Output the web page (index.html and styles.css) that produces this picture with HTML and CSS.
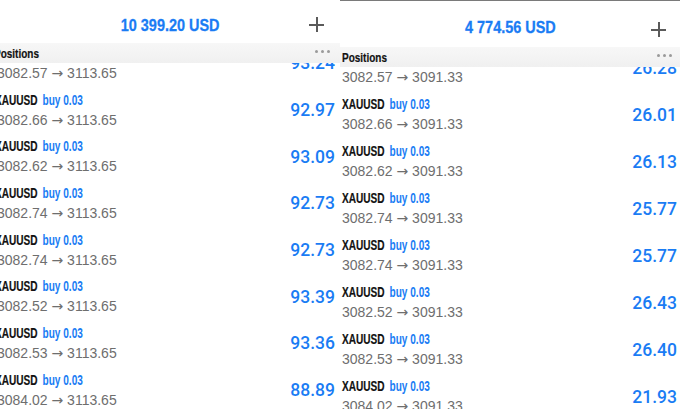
FILE: index.html
```html
<!DOCTYPE html>
<html lang="en">
<head>
    <meta charset="UTF-8">
    <meta name="viewport" content="width=device-width, initial-scale=1.0">
    <title>Positions</title>
    <link rel="stylesheet" href="styles.css">
</head>
<body>
    <div class="screens">
        <div class="screen screen-left">
            <div class="top">
                <span class="balance">10 399.20 USD</span>
                <span class="plus"></span>
            </div>
            <div class="section">
                <span class="section-title">Positions</span>
                <span class="dots"><i></i><i></i><i></i></span>
            </div>
            <div class="list">
                <div class="rows">
                    <div class="row"><div class="info"><div class="name">XAUUSD <span class="side">buy 0.03</span></div><div class="price">3082.57 <span class="arrow">&rarr;</span> 3113.65</div></div><div class="profit">93.24</div></div>
                    <div class="row"><div class="info"><div class="name">XAUUSD <span class="side">buy 0.03</span></div><div class="price">3082.66 <span class="arrow">&rarr;</span> 3113.65</div></div><div class="profit">92.97</div></div>
                    <div class="row"><div class="info"><div class="name">XAUUSD <span class="side">buy 0.03</span></div><div class="price">3082.62 <span class="arrow">&rarr;</span> 3113.65</div></div><div class="profit">93.09</div></div>
                    <div class="row"><div class="info"><div class="name">XAUUSD <span class="side">buy 0.03</span></div><div class="price">3082.74 <span class="arrow">&rarr;</span> 3113.65</div></div><div class="profit">92.73</div></div>
                    <div class="row"><div class="info"><div class="name">XAUUSD <span class="side">buy 0.03</span></div><div class="price">3082.74 <span class="arrow">&rarr;</span> 3113.65</div></div><div class="profit">92.73</div></div>
                    <div class="row"><div class="info"><div class="name">XAUUSD <span class="side">buy 0.03</span></div><div class="price">3082.52 <span class="arrow">&rarr;</span> 3113.65</div></div><div class="profit">93.39</div></div>
                    <div class="row"><div class="info"><div class="name">XAUUSD <span class="side">buy 0.03</span></div><div class="price">3082.53 <span class="arrow">&rarr;</span> 3113.65</div></div><div class="profit">93.36</div></div>
                    <div class="row"><div class="info"><div class="name">XAUUSD <span class="side">buy 0.03</span></div><div class="price">3084.02 <span class="arrow">&rarr;</span> 3113.65</div></div><div class="profit">88.89</div></div>
                </div>
            </div>
        </div>

        <div class="screen screen-right">
            <div class="top">
                <span class="balance">4 774.56 USD</span>
                <span class="plus"></span>
            </div>
            <div class="section">
                <span class="section-title">Positions</span>
                <span class="dots"><i></i><i></i><i></i></span>
            </div>
            <div class="list">
                <div class="rows">
                    <div class="row"><div class="info"><div class="name">XAUUSD <span class="side">buy 0.03</span></div><div class="price">3082.57 <span class="arrow">&rarr;</span> 3091.33</div></div><div class="profit">26.28</div></div>
                    <div class="row"><div class="info"><div class="name">XAUUSD <span class="side">buy 0.03</span></div><div class="price">3082.66 <span class="arrow">&rarr;</span> 3091.33</div></div><div class="profit">26.01</div></div>
                    <div class="row"><div class="info"><div class="name">XAUUSD <span class="side">buy 0.03</span></div><div class="price">3082.62 <span class="arrow">&rarr;</span> 3091.33</div></div><div class="profit">26.13</div></div>
                    <div class="row"><div class="info"><div class="name">XAUUSD <span class="side">buy 0.03</span></div><div class="price">3082.74 <span class="arrow">&rarr;</span> 3091.33</div></div><div class="profit">25.77</div></div>
                    <div class="row"><div class="info"><div class="name">XAUUSD <span class="side">buy 0.03</span></div><div class="price">3082.74 <span class="arrow">&rarr;</span> 3091.33</div></div><div class="profit">25.77</div></div>
                    <div class="row"><div class="info"><div class="name">XAUUSD <span class="side">buy 0.03</span></div><div class="price">3082.52 <span class="arrow">&rarr;</span> 3091.33</div></div><div class="profit">26.43</div></div>
                    <div class="row"><div class="info"><div class="name">XAUUSD <span class="side">buy 0.03</span></div><div class="price">3082.53 <span class="arrow">&rarr;</span> 3091.33</div></div><div class="profit">26.40</div></div>
                    <div class="row"><div class="info"><div class="name">XAUUSD <span class="side">buy 0.03</span></div><div class="price">3084.02 <span class="arrow">&rarr;</span> 3091.33</div></div><div class="profit">21.93</div></div>
                </div>
            </div>
        </div>
    </div>
</body>
</html>
```

FILE: styles.css
```css
html, body {
    margin: 0;
    padding: 0;
    background: #fff;
}
body {
    font-family: "Liberation Sans", Arial, sans-serif;
    width: 680px;
    height: 409px;
    overflow: hidden;
}
.screens {
    display: flex;
    height: 409px;
}
.screen {
    display: flex;
    flex-direction: column;
    overflow: hidden;
    background: #fff;
}
.screen-left {
    width: 340px;
    --row-h: 46.7px;
    --pad-l: 0px;
    --pad-r: 5px;
}
.screen-right {
    width: 340px;
    border-top: 1px solid #7a7a7a;
    --row-h: 47px;
    --pad-l: 1px;
    --pad-r: 3px;
}
.top {
    height: 43px;
    display: flex;
    align-items: center;
    justify-content: center;
    position: relative;
    flex-shrink: 0;
}
.screen-right .top {
    height: 46px;
}
.balance {
    display: inline-block;
    font-weight: bold;
    font-size: 17px;
    color: #1a7cf4;
    margin-top: 8px;
    transform: scaleX(0.85);
    -webkit-text-stroke: 0.3px #1a7cf4;
}
.plus {
    position: absolute;
    right: 16px;
    top: 17px;
    width: 15px;
    height: 15px;
}
.screen-right .plus {
    right: 14px;
    top: 21px;
}
.plus::before,
.plus::after {
    content: "";
    position: absolute;
    background: #5a5a5a;
}
.plus::before {
    left: 0;
    right: 0;
    top: 7px;
    height: 1.5px;
}
.plus::after {
    top: 0;
    bottom: 0;
    left: 7px;
    width: 1.5px;
}
.section {
    height: 20px;
    flex-shrink: 0;
    display: flex;
    align-items: center;
    justify-content: space-between;
    background: linear-gradient(#f7f7f7, #f0f0f0);
    padding: 0 var(--pad-r) 0 var(--pad-l);
}
.section-title {
    display: inline-block;
    font-weight: bold;
    font-size: 13.5px;
    color: #111;
    margin-left: -6px;
    transform: scaleX(0.74);
    transform-origin: left center;
    -webkit-text-stroke: 0.2px #111;
}
.screen-right .section-title {
    margin-left: 1px;
}
.dots {
    display: flex;
    gap: 3px;
    margin-right: 5px;
    margin-top: -3px;
}
.dots i {
    width: 3px;
    height: 3px;
    border-radius: 50%;
    background: #9a9a9a;
}
.list {
    flex: 1;
    overflow: hidden;
}
.rows {
    margin-top: -23px;
}
.row {
    height: var(--row-h);
    display: flex;
    align-items: center;
    justify-content: space-between;
    padding: 0 var(--pad-r) 0 var(--pad-l);
}
.info {
    display: flex;
    flex-direction: column;
    align-items: flex-start;
    margin-left: -3px;
}
.screen-right .info {
    margin-left: 1px;
}
.name {
    display: inline-block;
    font-weight: bold;
    font-size: 14px;
    line-height: 19px;
    color: #111;
    white-space: nowrap;
    transform: scaleX(0.72);
    transform-origin: left center;
    -webkit-text-stroke: 0.2px #111;
}
.screen-left .name {
    margin-left: -2px;
}
.side {
    color: #1a7cf4;
    margin-left: 3px;
    -webkit-text-stroke: 0;
}
.price {
    font-size: 14px;
    line-height: 20px;
    color: #6e6e6e;
    white-space: nowrap;
}
.arrow {
    font-family: "DejaVu Sans", sans-serif;
    font-size: 14px;
}
.profit {
    font-family: Roboto, "Liberation Sans", sans-serif;
    font-weight: 500;
    font-size: 17.5px;
    color: #1a7cf4;
}
```
